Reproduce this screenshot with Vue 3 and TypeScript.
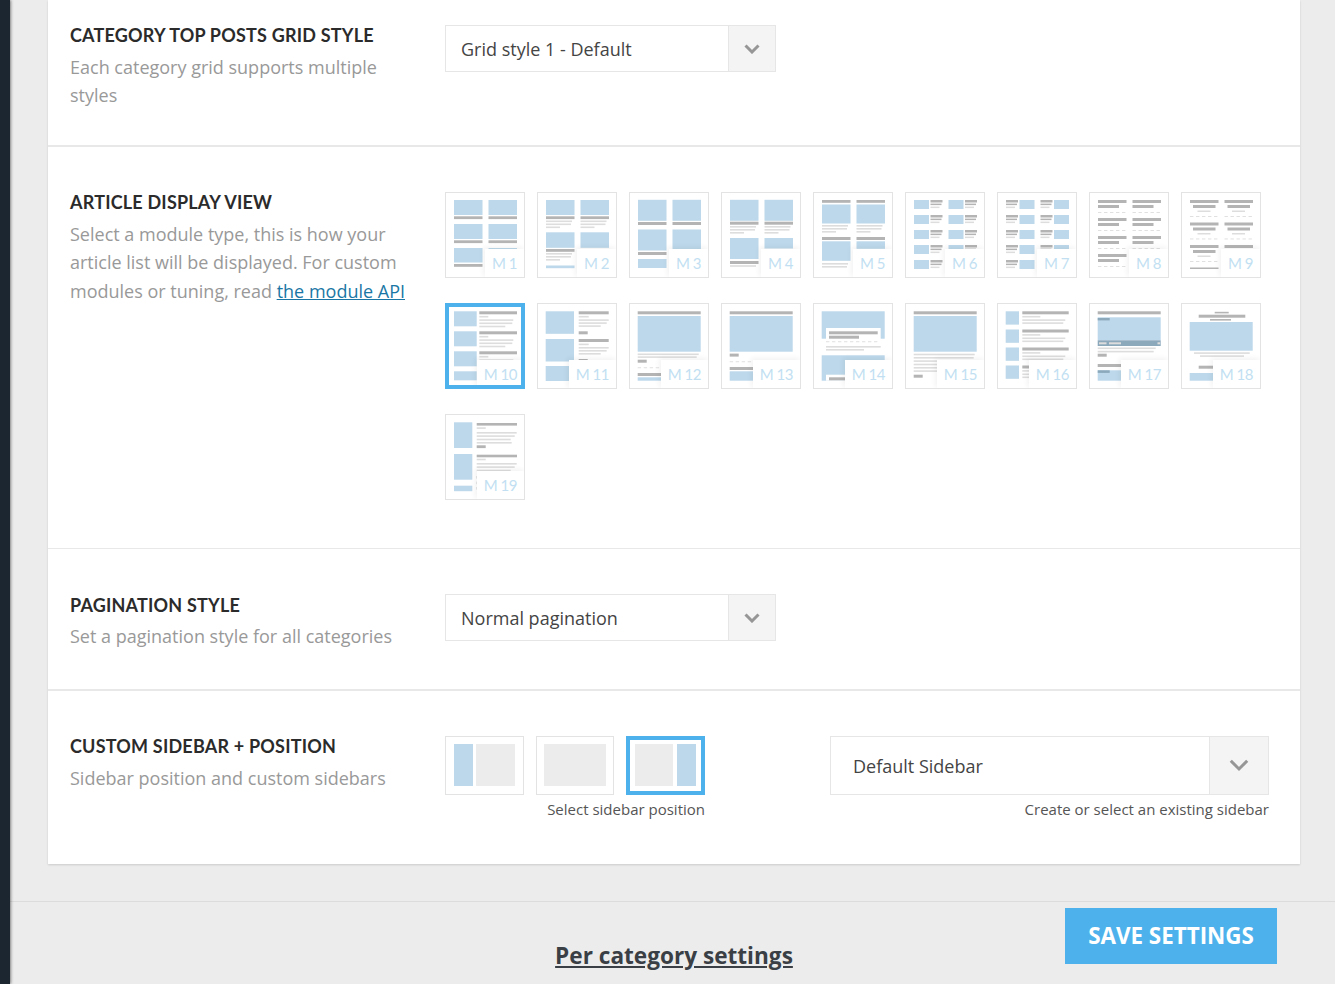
<script setup lang="ts">
type Kind = 'b' | 'g' | 'l' | 'd' | 'w' | 'p'
interface Shape { x: number; y: number; w: number; h: number; k: Kind }
interface Tile { name: string; shapes: Shape[]; active?: boolean }

const C1 = 9
const C2 = 43.5
const CW = 28.5
const FULL = 63

function r(x: number, y: number, w: number, h: number, k: Kind): Shape {
  return { x, y, w, h, k }
}
function dash(x: number, y: number, w: number): Shape[] {
  const out: Shape[] = []
  for (let p = 0; p < w; p += 6) out.push(r(x + p, y, 3.4, 0.9, 'l'))
  return out
}
function lines(x: number, ys: number[], ws: number[]): Shape[] {
  return ys.map((y, i) => r(x, y, ws[i], 1.6, 'l'))
}
function cols(fn: (x: number, second: boolean) => Shape[]): Shape[] {
  return [...fn(C1, false), ...fn(C2, true)]
}

const m1 = cols((x) => [
  r(x, 8, CW, 15, 'b'), r(x, 24.3, CW, 2.8, 'g'),
  r(x, 32, CW, 15, 'b'), r(x, 48.3, CW, 2.8, 'g'),
  r(x, 56, CW, 14.5, 'b'), r(x, 72, CW, 2.8, 'g')
])
const m2 = cols((x) => [
  r(x, 8, CW, 15, 'b'), r(x, 24.3, CW, 2.8, 'g'),
  ...lines(x, [28.5, 31.5, 34.5], [26, 25, 14]),
  r(x, 40.3, CW, 15.5, 'b'), r(x, 57, CW, 2.8, 'g'),
  ...lines(x, [61, 64, 67], [26, 25, 14]),
  r(x, 73.5, CW, 2.7, 'b')
])
const m3 = cols((x) => [
  r(x, 7.8, CW, 21, 'b'), r(x, 30, CW, 3, 'g'),
  r(x, 37.5, CW, 21, 'b'), r(x, 60, CW, 3, 'g'),
  r(x, 67, CW, 9, 'b')
])
const m4 = cols((x, s) => [
  r(x, 7.8, CW, 21, 'b'), r(x, 29.7, CW, 3, 'g'),
  ...lines(x, [34, 37, 40], [26, 25, 14]),
  r(x, 46, CW, s ? 10.5 : 21, 'b'), r(x, 69, CW, 3, 'g'),
  ...lines(x, [73.2], [26])
])
const m5 = cols((x, s) => [
  r(x, 8, CW, 2.8, 'g'), r(x, 12.5, CW, 19, 'b'),
  ...lines(x, [33, 36, 39], [26, 25, 14]),
  r(x, 45, CW, 3, 'g'), r(x, 49.3, CW, s ? 7.5 : 19.5, 'b'),
  ...lines(x, [71, 74], [26, 25])
])
function smallGrid(textFirst: boolean): Shape[] {
  const out: Shape[] = []
  for (const base of [C1, C2]) {
    for (const y of [8, 23, 38, 53, 68]) {
      const blueX = textFirst ? base + 13.5 : base
      const textX = textFirst ? base : base + 16.5
      out.push(r(blueX, y, 15, 9, 'b'))
      out.push(r(textX, y, 12, 2.5, 'g'))
      out.push(r(textX, y + 3.6, 11, 1.5, 'g'))
      out.push(r(textX, y + 6.6, 9, 1.5, 'l'))
    }
  }
  return out
}
const m8 = cols((x) => {
  const out: Shape[] = []
  for (const y of [8, 26, 44, 62]) {
    out.push(r(x, y, CW, 3, 'g'), r(x, y + 5, 21, 3, 'g'), ...dash(x, y + 12, CW))
  }
  return out
})
const m9 = cols((x) => {
  const out: Shape[] = []
  for (const y of [8, 30.5, 53]) {
    out.push(
      r(x, y, CW, 3, 'g'), r(x + 3, y + 5, 22.5, 3, 'g'),
      r(x + 7.5, y + 10.5, 13, 1.5, 'l'), ...dash(x, y + 16, CW)
    )
  }
  out.push(r(x, 75.5, CW, 1.5, 'g'))
  return out
})
function m10(): Shape[] {
  const out: Shape[] = []
  const heights = [15, 15, 15, 9]
  ;[8.3, 28.3, 48.3, 68.3].forEach((y, i) => {
    out.push(r(9, y, 22.7, heights[i], 'b'))
    if (i < 3) {
      out.push(r(34.3, y, 37.7, 3, 'g'))
      out.push(...lines(34.3, [y + 4.6, y + 8, y + 11.2, y + 14.4], [9, 34, 33, 26]))
    }
  })
  return out
}
function m11(): Shape[] {
  const out: Shape[] = [r(8.7, 63, 28.3, 15, 'b')]
  for (const y of [8.3, 36]) {
    out.push(r(8.7, y, 28.3, 22.5, 'b'), r(41.7, y, 30, 3, 'g'))
    out.push(...lines(41.7, [y + 4.6, y + 8, y + 11, y + 14], [10, 30, 28, 22]))
    out.push(r(41.7, y + 20, 9, 3, 'g'))
  }
  return out
}
const m12: Shape[] = [
  r(8.7, 8.3, FULL, 3, 'g'), r(8.7, 13, FULL, 35.7, 'b'),
  ...lines(8.7, [50.5, 53.3], [61, 59]), r(8.7, 56.7, 9, 3, 'g'),
  ...dash(8.7, 64.3, FULL), r(8.7, 70, FULL, 3, 'g'), r(8.7, 74.3, FULL, 3.4, 'b')
]
const m13: Shape[] = [
  r(8.7, 8.3, FULL, 3, 'g'), r(8.7, 13, FULL, 35.7, 'b'),
  r(8.7, 50.6, 9, 3, 'g'), ...dash(8.7, 58.3, FULL),
  r(8.7, 64, FULL, 3, 'g'), r(8.7, 68.3, FULL, 9.4, 'b')
]
const m14: Shape[] = [
  r(8.7, 8.3, FULL, 27.4, 'b'), r(13, 25, 54.7, 11, 'w'),
  r(16, 28.3, 48.7, 3, 'g'), r(16, 32.7, 30, 3, 'g'),
  ...dash(13, 38.3, 54), ...lines(13, [43, 46], [54.7, 38]),
  r(8.7, 52.3, FULL, 25.4, 'b'), r(13, 71.7, 54, 6, 'w'), r(16, 74.3, 30, 3, 'g')
]
const m15: Shape[] = [
  r(8.7, 8.3, FULL, 3, 'g'), r(8.7, 13, FULL, 35.7, 'b'),
  ...lines(8.7, [50.7, 54, 57.3, 60.7, 64, 67.3], [61, 60, 61, 60, 61, 40]),
  r(8.7, 71.7, 9, 3, 'g')
]
function m16(): Shape[] {
  const out: Shape[] = []
  for (const y of [8.3, 26.5, 44.5, 62.5]) {
    out.push(r(8.7, y, 13.3, 13.3, 'b'), r(25.3, y, 46.4, 3, 'g'))
    out.push(...lines(25.3, [y + 4.6, y + 8, y + 11], [18, 43, 41]))
  }
  return out
}
const m17: Shape[] = [
  r(8.7, 8.3, FULL, 3, 'g'), r(8.7, 14.3, FULL, 23, 'b'), r(8.7, 15, 12, 2.4, 'p'),
  r(8.7, 37.3, FULL, 5.7, 'p'), r(10, 39.3, 7.5, 2, 'l'), r(20, 39.3, 12, 2, 'l'), r(68.5, 39.3, 2.6, 2, 'l'),
  ...lines(8.7, [44.5, 47.8], [58, 56]), r(8.7, 50.7, 9, 3, 'g'),
  r(8.7, 61, 25, 3, 'g'), r(8.7, 67.3, FULL, 10.4, 'b'), r(8.7, 67.3, 12, 2.6, 'p')
]
const m18: Shape[] = [
  r(33.7, 8.8, 14, 1.6, 'g'), r(17.7, 11.7, 46.6, 3, 'g'), r(29, 16, 21, 1.6, 'g'),
  r(8.7, 19, FULL, 28.7, 'b'), ...lines(13, [49.3], [55.7]), ...lines(19, [52.3], [44]),
  r(17.7, 62.7, 40, 3, 'g'), r(8.7, 70, FULL, 7.7, 'b')
]
const m19: Shape[] = [
  r(9, 8.3, 18.3, 25.7, 'b'), r(9, 40, 18.3, 25.7, 'b'), r(9, 71.7, 18.3, 5.5, 'b'),
  r(31.7, 9, 40.3, 2.6, 'g'),
  ...lines(31.7, [13.3, 18, 21.3, 24.7, 28], [9, 40, 38, 34, 35]),
  r(31.7, 31.3, 9, 2.8, 'g'), r(31.7, 40.7, 40.3, 2.6, 'g'),
  ...lines(31.7, [44.7, 49, 52.3, 55.7], [9, 40, 38, 34]),
  r(31.7, 62, 2.6, 2.6, 'g'), r(31.7, 67.6, 2.6, 2.6, 'g'), r(31.7, 73, 2.6, 2.6, 'g')
]

const tiles: Tile[] = [
  { name: 'M 1', shapes: m1 },
  { name: 'M 2', shapes: m2 },
  { name: 'M 3', shapes: m3 },
  { name: 'M 4', shapes: m4 },
  { name: 'M 5', shapes: m5 },
  { name: 'M 6', shapes: smallGrid(false) },
  { name: 'M 7', shapes: smallGrid(true) },
  { name: 'M 8', shapes: m8 },
  { name: 'M 9', shapes: m9 },
  { name: 'M 10', shapes: m10(), active: true },
  { name: 'M 11', shapes: m11() },
  { name: 'M 12', shapes: m12 },
  { name: 'M 13', shapes: m13 },
  { name: 'M 14', shapes: m14 },
  { name: 'M 15', shapes: m15 },
  { name: 'M 16', shapes: m16() },
  { name: 'M 17', shapes: m17 },
  { name: 'M 18', shapes: m18 },
  { name: 'M 19', shapes: m19 }
]
</script>

<template>
  <div class="page">
    <div class="rail"></div>
    <main class="main">
      <section class="card">
        <div class="row row-first">
          <div class="info">
            <h3>CATEGORY TOP POSTS GRID STYLE</h3>
            <p>Each category grid supports multiple styles</p>
          </div>
          <div class="control">
            <div class="select">
              <span class="select-value">Grid style 1 - Default</span>
              <span class="select-btn">
                <svg width="16" height="10" viewBox="0 0 16 10"><path d="M1.5 1.5 8 8l6.5-6.5" /></svg>
              </span>
            </div>
          </div>
        </div>

        <div class="row row-modules">
          <div class="info">
            <h3>ARTICLE DISPLAY VIEW</h3>
            <p>Select a module type, this is how your article list will be displayed. For custom modules or tuning, read <a class="link">the module API</a></p>
          </div>
          <div class="control tiles">
            <div v-for="t in tiles" :key="t.name" class="tile" :class="{ active: t.active }">
              <svg class="art" width="80" height="86" viewBox="0 0 80 86">
                <rect
                  v-for="(s, i) in t.shapes"
                  :key="i"
                  :class="s.k"
                  :x="s.x"
                  :y="s.y"
                  :width="s.w"
                  :height="s.h"
                />
              </svg>
              <span class="badge">{{ t.name }}</span>
            </div>
          </div>
        </div>

        <div class="row row-pagination">
          <div class="info">
            <h3>PAGINATION STYLE</h3>
            <p>Set a pagination style for all categories</p>
          </div>
          <div class="control">
            <div class="select">
              <span class="select-value">Normal pagination</span>
              <span class="select-btn">
                <svg width="16" height="10" viewBox="0 0 16 10"><path d="M1.5 1.5 8 8l6.5-6.5" /></svg>
              </span>
            </div>
          </div>
        </div>

        <div class="row row-last">
          <div class="info">
            <h3>CUSTOM SIDEBAR + POSITION</h3>
            <p>Sidebar position and custom sidebars</p>
          </div>
          <div class="control sidebar-control">
            <div class="positions">
              <div class="pos-tiles">
                <div class="pos">
                  <span class="bar blue"></span><span class="bar grey wide"></span>
                </div>
                <div class="pos pos-full">
                  <span class="bar grey full"></span>
                </div>
                <div class="pos active">
                  <span class="bar grey wide"></span><span class="bar blue"></span>
                </div>
              </div>
              <div class="caption">Select sidebar position</div>
            </div>
            <div class="sidebar-select">
              <div class="select select-large">
                <span class="select-value">Default Sidebar</span>
                <span class="select-btn">
                  <svg width="20" height="13" viewBox="0 0 20 13"><path d="M1.8 1.8 10 10l8.2-8.2" /></svg>
                </span>
              </div>
              <div class="caption">Create or select an existing sidebar</div>
            </div>
          </div>
        </div>
      </section>

      <footer class="footer">
        <span></span>
        <h2 class="per-category">Per category settings</h2>
        <button class="save" type="button">SAVE SETTINGS</button>
      </footer>
    </main>
  </div>
</template>

<style>
html, body { margin: 0; height: 984px; overflow: hidden; background: #ececec; }
</style>

<style scoped>
.page {
  display: flex;
  height: 984px;
  overflow: hidden;
  font-family: "Open Sans", "Liberation Sans", sans-serif;
  color: #444;
}
.rail { width: 10px; flex: none; background: #1c2630; box-shadow: 1px 0 3px rgba(0, 0, 0, .45); position: relative; z-index: 1; }
.main { flex: 1; min-width: 0; display: flex; flex-direction: column; background: #ececec; }
.card {
  margin: 0 35px 0 38px;
  background: #fff;
  box-shadow: 0 1px 2px rgba(0, 0, 0, .14);
}
.row {
  display: grid;
  grid-template-columns: 375px 1fr;
  box-sizing: border-box;
  padding: 45px 31px 0 22px;
  border-bottom: 1px solid #e8e8e8;
}
.row-first { padding-top: 25px; height: 147px; border-bottom-width: 2px; }
.row-modules { height: 402px; }
.row-pagination { height: 142px; border-bottom-width: 2px; }
.row-last { height: 173px; border-bottom: 0; }
.info h3 {
  margin: 0;
  font-family: Lato, "Open Sans", sans-serif;
  font-size: 18px;
  line-height: 20px;
  font-weight: 700;
  letter-spacing: .2px;
  color: #2b2b2b;
}
.info p {
  margin: 8px 0 0;
  width: 340px;
  font-size: 18px;
  line-height: 28.3px;
  color: #999;
}
.row-pagination h3 { padding-top: 1px; }
.row-pagination p { margin-top: 7px; }
.link { color: #1a77a5; text-decoration: underline; }
.select { display: flex; width: 331px; height: 47px; box-sizing: border-box; border: 1px solid #e6e6e6; }
.select-value { flex: 1; padding-left: 15px; font-size: 18px; line-height: 46px; color: #444; }
.select-btn {
  width: 47px;
  flex: none;
  display: flex;
  align-items: center;
  justify-content: center;
  background: #f4f4f4;
  border-left: 1px solid #e6e6e6;
  box-sizing: border-box;
}
.select-btn svg { display: block; }
.select-btn path { fill: none; stroke: #969696; stroke-width: 3; }
.tiles { display: flex; flex-wrap: wrap; align-content: flex-start; gap: 25px 12px; }
.tile {
  position: relative;
  width: 80px;
  height: 86px;
  box-sizing: border-box;
  overflow: hidden;
  background: #fff;
}
.tile::after { content: ""; position: absolute; inset: 0; border: 1px solid #e3e3e3; }
.tile.active::after { border: 4px solid #4db2ec; }
.art { display: block; filter: blur(.5px); }
.art .b { fill: #bcd8ea; }
.art .g { fill: #b4b4b4; }
.art .l { fill: #dddddd; }
.art .w { fill: #ffffff; }
.art .p { fill: #8ca9bc; }
.badge {
  position: absolute;
  right: 0;
  bottom: 0;
  height: 29px;
  box-sizing: border-box;
  padding: 3px 8px 0 7px;
  font-family: Lato, "Open Sans", sans-serif;
  font-size: 15px;
  line-height: 22px;
  letter-spacing: -.5px;
  color: #c2dff2;
  background: #fff;
  box-shadow: -2px -2px 5px rgba(0, 0, 0, .05);
}
.sidebar-control { display: flex; justify-content: space-between; }
.positions { width: 260px; }
.pos-tiles { display: flex; gap: 12px; }
.pos {
  flex: none;
  width: 79px;
  height: 59px;
  box-sizing: border-box;
  border: 1px solid #e3e3e3;
  padding: 7px 8px;
  display: flex;
  gap: 3px;
}
.pos-full { width: 78px; padding: 7px; }
.pos.active { border: 4px solid #4db2ec; padding: 4px 5px; gap: 4px; }
.bar { display: block; height: 42px; }
.bar.blue { width: 19px; background: #bcd8ea; }
.bar.grey { background: #ececec; }
.bar.wide { width: 39px; }
.bar.full { width: 62px; }
.caption {
  margin-top: 4px;
  font-size: 15px;
  line-height: 20px;
  text-align: right;
  color: #555;
}
.sidebar-select { width: 439px; }
.select-large { width: 439px; height: 59px; }
.select-large .select-value { padding-left: 22px; line-height: 58px; }
.select-large .select-btn { width: 59px; margin-left: 1px; }
.footer {
  display: grid;
  grid-template-columns: 1fr auto 1fr;
  margin-top: 37px;
  padding: 6px 58px 0 61px;
  height: 83px;
  box-sizing: border-box;
  border-top: 1px solid #dcdcdc;
  background: #ececec;
}
.per-category {
  margin: 32px 0 0;
  font-size: 22.6px;
  line-height: 32px;
  font-weight: 700;
  color: #3a3f45;
  text-decoration: underline;
  white-space: nowrap;
}
.save {
  justify-self: end;
  width: 212px;
  height: 56px;
  border: 0;
  padding: 0 0 2px;
  background: #4db2ec;
  color: #fff;
  font-family: inherit;
  font-size: 22.4px;
  font-weight: 700;
}
</style>
